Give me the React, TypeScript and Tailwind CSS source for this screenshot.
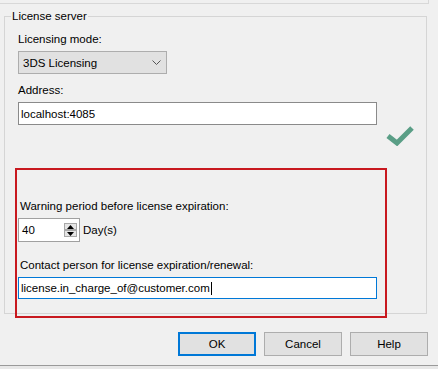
import { ReactNode } from 'react';

const Button = ({ children, focused }: { children: ReactNode; focused?: boolean }) => (
  <div
    className={`flex h-[24px] w-[78px] items-center justify-center bg-[#e1e1e1] ${
      focused ? 'border-2 border-[#0078d7]' : 'border border-[#adadad]'
    }`}
  >
    {children}
  </div>
);

const SpinArrow = ({ up }: { up?: boolean }) => (
  <div className="flex h-[7px] w-[13px] items-center justify-center border border-[#a8a8a8] bg-[#e5e5e5]">
    <svg width="7" height="4" viewBox="0 0 7 4">
      <polygon points={up ? '0,4 3.5,0 7,4' : '0,0 3.5,4 7,0'} fill="#000" />
    </svg>
  </div>
);

export default function App() {
  return (
    <div
      className="flex h-[369px] w-[438px] flex-col overflow-hidden bg-[#f0f0f0] text-[11.5px] leading-[16px] text-black"
      style={{ fontFamily: '"Liberation Sans", Arial, sans-serif' }}
    >
      {/* bottom edge of the previous group */}
      <div className="h-[4px] w-[429px] shrink-0 border-b border-r border-[#d8d8d8]" />

      {/* License server group */}
      <div className="ml-[4px] mt-[12px] h-[298px] w-[423px] shrink-0 border border-[#d5d5d5] pl-[13px]">
        <div className="-ml-[7px] -mt-[9px] w-fit bg-[#f0f0f0] px-[1px]">License server</div>

        <div className="mt-[7px]">Licensing mode:</div>
        <div className="mt-[4px] flex h-[23px] w-[149px] items-center justify-between border border-[#adadad] bg-[#e1e1e1] pl-[4px] pr-[5px]">
          <span>3DS Licensing</span>
          <svg width="9" height="5" viewBox="0 0 9 5">
            <polyline points="0.5,0.5 4.5,4.5 8.5,0.5" fill="none" stroke="#555" strokeWidth="1" />
          </svg>
        </div>

        <div className="mt-[8px]">Address:</div>
        <div className="mt-[4px] flex items-start">
          <div className="flex h-[23px] w-[359px] items-center border border-[#8a8a8a] bg-white pl-[2px]">
            localhost:4085
          </div>
          <svg className="ml-[9px] mt-[22px]" width="28" height="22" viewBox="0 0 28 22">
            <polyline points="2,12 11,19 26,4" fill="none" stroke="#5a9e86" strokeWidth="5" />
          </svg>
        </div>

        {/* highlighted section */}
        <div className="-ml-[3px] mt-[22px] h-[150px] w-[372px] border-2 border-[#c8191f] pt-[28px]">
          <div className="ml-[3px]">Warning period before license expiration:</div>
          <div className="ml-[1px] mt-[4px] flex items-center">
            <div className="flex h-[24px] w-[62px] items-center justify-between border border-[#a0a0a0] bg-white pl-[3px] pr-[2px]">
              <span>40</span>
              <div className="flex flex-col">
                <SpinArrow up />
                <SpinArrow />
              </div>
            </div>
            <span className="ml-[3px]">Day(s)</span>
          </div>

          <div className="ml-[3px] mt-[15px]">Contact person for license expiration/renewal:</div>
          <div className="ml-[1px] mt-[4px] flex h-[22px] w-[359px] items-center border border-[#0078d7] bg-white pl-[2px]">
            <span>license.in_charge_of@customer.com</span>
            <span className="ml-[1px] h-[13px] w-px bg-black" />
          </div>
        </div>
      </div>

      {/* dialog buttons */}
      <div className="mt-[18px] flex shrink-0 justify-end gap-[8px] pr-[10px]">
        <Button focused>OK</Button>
        <Button>Cancel</Button>
        <Button>Help</Button>
      </div>

      <div className="mt-auto h-[4px] shrink-0 border-t border-[#9a9a9a] bg-[#e8e8e8]" />
    </div>
  );
}
